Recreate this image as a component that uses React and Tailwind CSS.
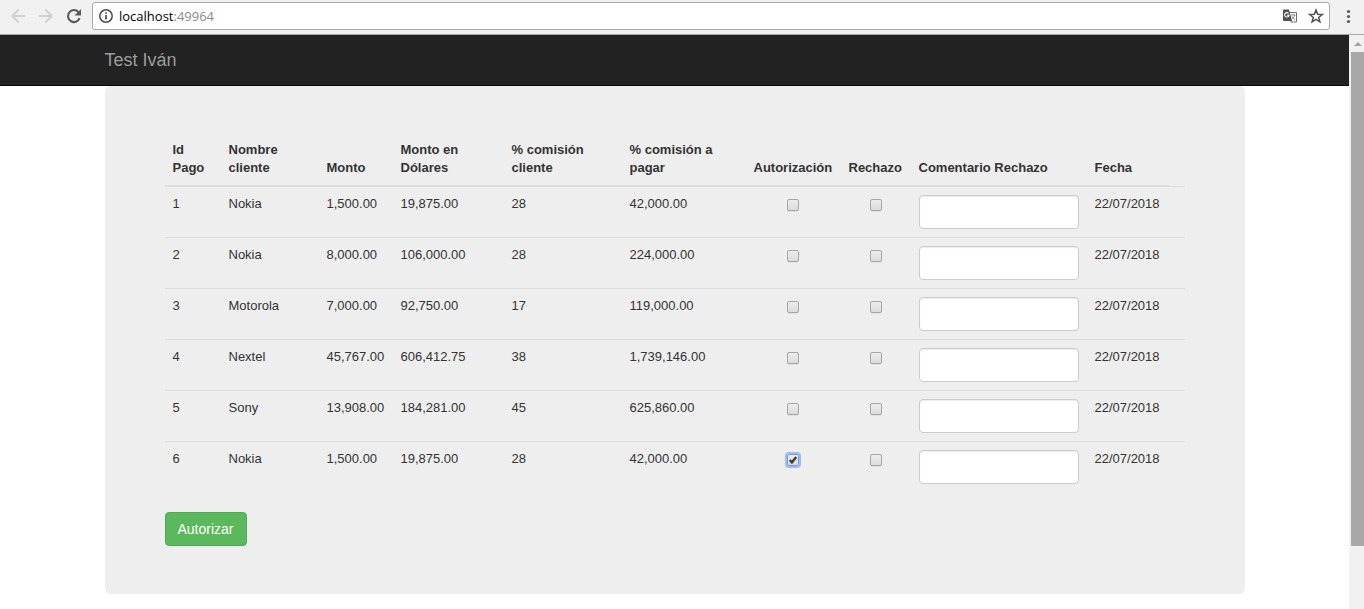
import { useState } from "react";

const PAYMENTS = [
  { id: 1, client: "Nokia", amount: "1,500.00", usd: "19,875.00", fee: 28, total: "42,000.00", date: "22/07/2018" },
  { id: 2, client: "Nokia", amount: "8,000.00", usd: "106,000.00", fee: 28, total: "224,000.00", date: "22/07/2018" },
  { id: 3, client: "Motorola", amount: "7,000.00", usd: "92,750.00", fee: 17, total: "119,000.00", date: "22/07/2018" },
  { id: 4, client: "Nextel", amount: "45,767.00", usd: "606,412.75", fee: 38, total: "1,739,146.00", date: "22/07/2018" },
  { id: 5, client: "Sony", amount: "13,908.00", usd: "184,281.00", fee: 45, total: "625,860.00", date: "22/07/2018" },
  { id: 6, client: "Nokia", amount: "1,500.00", usd: "19,875.00", fee: 28, total: "42,000.00", date: "22/07/2018" },
];

const COLUMNS = [
  { title: "Id Pago", width: "w-[56px]" },
  { title: "Nombre cliente", width: "w-[98px]" },
  { title: "Monto", width: "w-[74px]" },
  { title: "Monto en Dólares", width: "w-[111px]" },
  { title: "% comisión cliente", width: "w-[118px]" },
  { title: "% comisión a pagar", width: "w-[124px]" },
  { title: "Autorización", width: "w-[95px]" },
  { title: "Rechazo", width: "w-[70px]" },
  { title: "Comentario Rechazo", width: "w-[176px]" },
  { title: "Fecha", width: "w-[82px]" },
];

function BrowserBar() {
  return (
    <div className="flex shrink-0 items-center border-b border-[#a9a9a9] bg-[#f1f1f1] pt-0.5 pb-1 pl-2.5">
      <button type="button" aria-label="Atrás" className="mr-3 text-[#d0d0d0]">
        <svg className="h-4 w-4" viewBox="0 0 16 16" fill="none" stroke="currentColor" strokeWidth="2">
          <path d="M15 8H2.5M8.5 1.8 2.3 8l6.2 6.2" />
        </svg>
      </button>
      <button type="button" aria-label="Adelante" className="mr-3 text-[#d0d0d0]">
        <svg className="h-4 w-4" viewBox="0 0 16 16" fill="none" stroke="currentColor" strokeWidth="2">
          <path d="M1 8h12.5M7.5 1.8 13.7 8l-6.2 6.2" />
        </svg>
      </button>
      <button type="button" aria-label="Recargar" className="mr-2.5 text-[#5a5a5a]">
        <svg className="h-4 w-4" viewBox="0 0 16 16">
          <path d="M13.6 10.2A6 6 0 1 1 12.4 4" fill="none" stroke="currentColor" strokeWidth="2.1" />
          <path d="M15 1v6.500H8.500z" fill="currentColor" />
        </svg>
      </button>
      <div className="flex h-7 flex-1 items-center rounded-[3px] border border-[#a9a9a9] bg-white pr-[5px] pl-1.5">
        <svg className="mr-1 h-4 w-4 text-[#4a4a4a]" viewBox="0 0 16 16" fill="none" stroke="currentColor">
          <circle cx="7" cy="8" r="6.200" strokeWidth="1.500" />
          <path d="M7 7v4.500M7 4.200v1.600" strokeWidth="1.700" />
        </svg>
        <p className="flex-1 font-['Open_Sans',sans-serif] text-[13px] leading-5 text-[#8a8a8a]">
          <span className="text-black">localhost</span>:49964
        </p>
        <button type="button" aria-label="Traducir esta página" className="mr-2.5">
          <svg className="h-4 w-4" viewBox="0 0 16 16">
            <path d="M7 4.500h7.500v9.500H9z" fill="#fff" stroke="#707070" />
            <path d="M9 7h4.500M11.200 6v1M12.800 7c-.5 2-1.800 3.300-3.300 4.300M9.800 8.200c.6 1.400 1.800 2.500 3.200 3.200" fill="none" stroke="#8a8a8a" />
            <path d="M1 2.500a1 1 0 0 1 1-1h5L10 13H2a1 1 0 0 1-1-1z" fill="#505050" />
            <path d="M6.600 5.500A2.200 2.200 0 1 0 7 7.300H5" fill="none" stroke="#fff" strokeWidth="1.100" />
          </svg>
        </button>
        <button type="button" aria-label="Añadir a marcadores">
          <svg className="h-4 w-4" viewBox="0 0 16 16" fill="none" stroke="#505050" strokeWidth="1.500">
            <path d="m8 2 1.700 4.200 4.500.3-3.500 2.900 1.200 4.400L8 11.400l-3.900 2.400 1.200-4.400L1.800 6.500l4.500-.3z" />
          </svg>
        </button>
      </div>
      <button type="button" aria-label="Menú" className="mr-2.5 ml-3">
        <svg className="h-4 w-3" viewBox="0 0 12 16" fill="#5a5a5a">
          <circle cx="6.500" cy="3.500" r="1.600" />
          <circle cx="6.500" cy="8.500" r="1.600" />
          <circle cx="6.500" cy="13.500" r="1.600" />
        </svg>
      </button>
    </div>
  );
}

function Scrollbar() {
  return (
    <div className="flex w-[15px] shrink-0 flex-col bg-[#f1f1f1] pl-0.5">
      <div className="flex h-[17px] items-center justify-center">
        <svg className="h-1 w-2" viewBox="0 0 8 4" fill="#a3a3a3">
          <path d="M0 4 4 0l4 4z" />
        </svg>
      </div>
      <div className="h-[86%] bg-[#a8a8a8]" />
    </div>
  );
}

function CheckBox({ label, checked, onChange, autoFocus }) {
  return (
    <span className="relative mt-1 inline-block h-3 w-3 align-top">
      <input
        type="checkbox"
        aria-label={label}
        checked={checked}
        onChange={onChange}
        autoFocus={autoFocus}
        className="block h-3 w-3 appearance-none rounded-[2px] border border-[#a6a6a6] bg-linear-to-b from-[#ededed] to-[#dcdcdc] shadow-[0_1px_0_rgba(0,0,0,0.06)] outline-none focus:border-[#7d9bd0] focus:shadow-none focus:ring-2 focus:ring-[#9dbcf3]"
      />
      {checked && (
        <svg className="pointer-events-none absolute inset-0 h-3 w-3" viewBox="0 0 13 13" fill="none">
          <path d="M3 6.500 5.300 9 10 3.300" stroke="#3c3c3c" strokeWidth="2.600" />
        </svg>
      )}
    </span>
  );
}

export default function App() {
  const [authorized, setAuthorized] = useState([6]);
  const [rejected, setRejected] = useState([]);
  const [comments, setComments] = useState({});

  const toggle = (setter, id) =>
    setter((prev) => (prev.includes(id) ? prev.filter((x) => x !== id) : [...prev, id]));

  return (
    <div className="flex h-screen flex-col overflow-hidden bg-white font-['Liberation_Sans',Arial,sans-serif] text-[#333]">
      <BrowserBar />
      <div className="flex min-h-0 flex-1">
        <div className="min-w-0 flex-1 overflow-hidden">
          <nav className="border-b border-[#080808] bg-[#222]">
            <div className="mx-auto max-w-[1140px] py-[15px]">
              <a href="#" className="block text-lg leading-5 text-[#9d9d9d]">Test Iván</a>
            </div>
          </nav>

          <main className="mx-auto max-w-[1140px] rounded-md bg-[#eee] px-[60px] py-12">
            <table className="w-full table-fixed border-collapse text-[13px] leading-[18px]">
              <thead>
                <tr className="text-left align-bottom">
                  {COLUMNS.map((c) => (
                    <th key={c.title} className={`${c.width} border-b-2 border-[#ddd] px-2 pt-[7px] pb-2 font-bold`}>
                      {c.title}
                    </th>
                  ))}
                </tr>
              </thead>
              <tbody>
                {PAYMENTS.map((p) => (
                  <tr key={p.id} className="border-t border-[#ddd] align-top">
                    <td className="p-2">{p.id}</td>
                    <td className="p-2">{p.client}</td>
                    <td className="p-2">{p.amount}</td>
                    <td className="p-2">{p.usd}</td>
                    <td className="p-2">{p.fee}</td>
                    <td className="p-2">{p.total}</td>
                    <td className="p-2 text-center">
                      <CheckBox
                        label={`Autorización ${p.id}`}
                        checked={authorized.includes(p.id)}
                        onChange={() => toggle(setAuthorized, p.id)}
                        autoFocus={p.id === 6}
                      />
                    </td>
                    <td className="p-2 text-center">
                      <CheckBox
                        label={`Rechazo ${p.id}`}
                        checked={rejected.includes(p.id)}
                        onChange={() => toggle(setRejected, p.id)}
                      />
                    </td>
                    <td className="p-2">
                      <input
                        type="text"
                        aria-label={`Comentario Rechazo ${p.id}`}
                        value={comments[p.id] || ""}
                        onChange={(e) => setComments({ ...comments, [p.id]: e.target.value })}
                        className="block h-[34px] w-full rounded border border-[#ccc] bg-white px-3 text-sm text-[#555] shadow-[inset_0_1px_1px_rgba(0,0,0,0.075)]"
                      />
                    </td>
                    <td className="p-2">{p.date}</td>
                    <td />
                  </tr>
                ))}
              </tbody>
            </table>

            <button
              type="button"
              className="mt-5 block rounded border border-[#4cae4c] bg-[#5cb85c] px-3 py-1.5 text-sm leading-5 text-white"
            >
              Autorizar
            </button>
          </main>
        </div>
        <Scrollbar />
      </div>
    </div>
  );
}
